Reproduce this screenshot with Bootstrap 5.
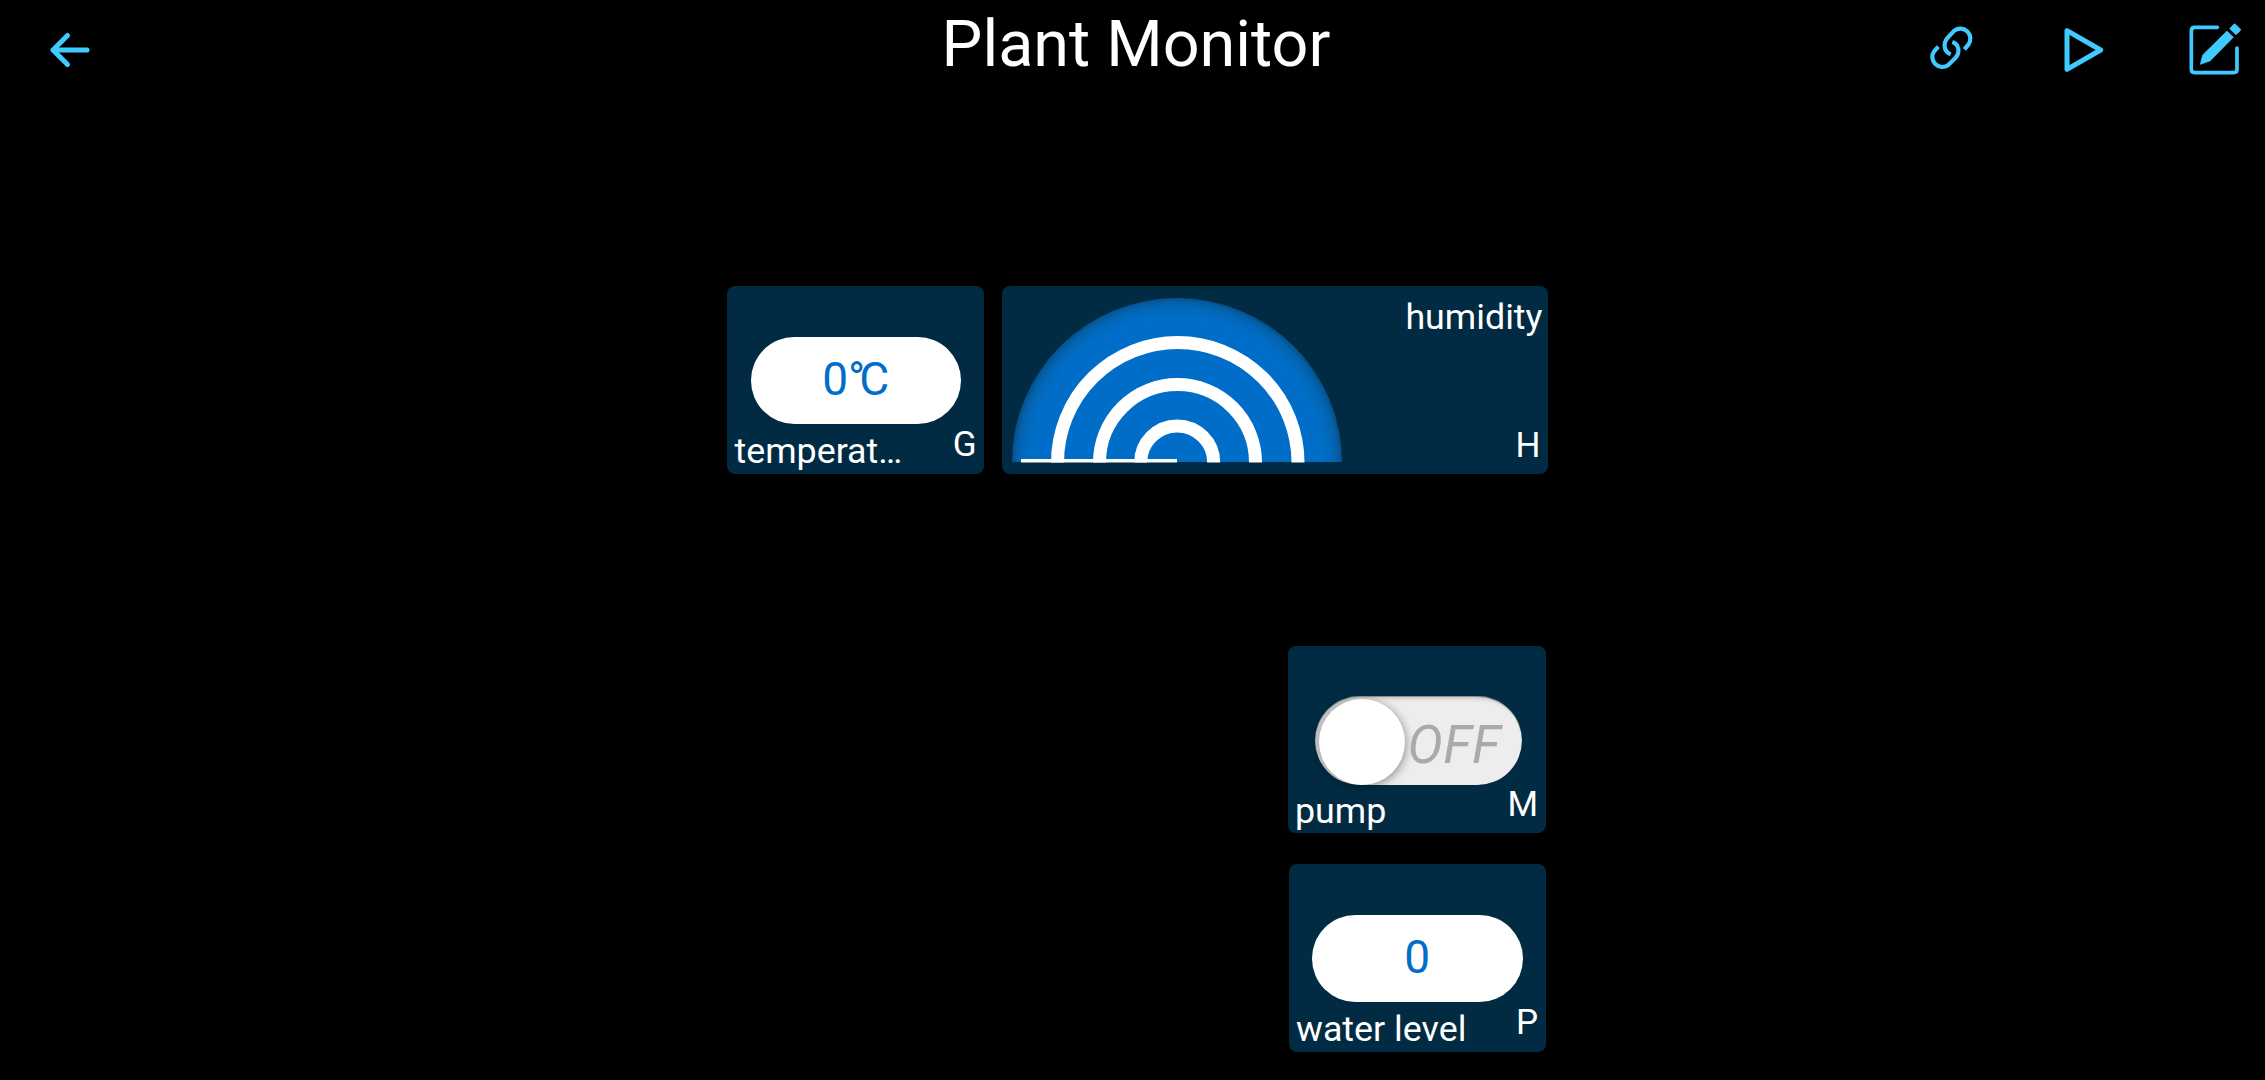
<!DOCTYPE html>
<html lang="en">
<head>
<meta charset="utf-8">
<meta name="viewport" content="width=device-width, initial-scale=1">
<title>Plant Monitor</title>
<link href="https://cdn.jsdelivr.net/npm/bootstrap@5.3.0/dist/css/bootstrap.min.css" rel="stylesheet">
<style>
  body { background: #000; color: #fff; font-family: Roboto, "Liberation Sans", sans-serif; min-height: 1080px; overflow: hidden; }
  .topbar { height: 100px; color: #3fcbff; }
  .topbar-side { flex: 1 1 0; height: 100px; }
  .topbar h1 { font-size: 64.7px; line-height: 88px; font-weight: 400; color: #fff; margin: 0 0 0 7px; }
  .topbar svg, .dial { display: block; }
  .board { width: 821px; margin-left: 727px; margin-top: 186px; }
  .tiles-top { gap: 18px; }
  .tiles-side { margin-top: 172px; padding-right: 2.5px; gap: 31px; }
  .tile { background: #002b42; border-radius: 8px; height: 188px; width: 257px; font-size: 35px; line-height: 40px; }
  .tile-pump { height: 187px; width: 258px; }
  .tile-wide { width: 546px; padding: 11px 5.5px 8.5px 10px; }
  .pill { width: 210.5px; height: 86.5px; margin: 51px 0 0 23.5px; padding-bottom: 2.5px; background: #fff; border-radius: 44px; color: #006ec8; font-size: 46px; }
  .degree { letter-spacing: -6px; }
  .toggle { width: 207px; height: 89.5px; margin: 49.5px 0 0 27.5px; padding: 3.5px 0 0 3.5px; background: #ededed; border-radius: 45px; box-shadow: inset 0 1px 1px rgba(0,0,0,.35), inset 4px 3px 4px rgba(0,0,0,.14); }
  .knob { width: 86px; height: 86px; background: #fff; box-shadow: 1px 2px 10px rgba(0,0,0,.4); }
  .state { font-size: 53px; line-height: 86px; font-style: italic; color: #aaa; padding: 3px 0 0 3px; letter-spacing: .3px; }
  .caption { padding: 1px 7.5px 0 7.5px; }
  .tile-pump .caption { padding-top: 0; }
  .title-text { font-size: 35.8px; }
  .caption .title-text { margin-top: 6px; }
  .pin { margin-right: 2px; }
</style>
</head>
<body>
<header class="topbar d-flex">
  <div class="topbar-side">
    <svg width="200" height="100" viewBox="0 0 200 100" fill="none" stroke="currentColor" stroke-width="5" stroke-linecap="round" stroke-linejoin="round"><path d="M87 50H53M67.500 35.500 53 50l14.500 14.500"/></svg>
  </div>
  <h1>Plant Monitor</h1>
  <div class="topbar-side d-flex justify-content-end">
    <svg class="flex-shrink-0" width="365" height="100" viewBox="0 0 1095 300" fill="none" stroke="currentColor">
      <g stroke-width="12.500">
        <path d="M152 163C132 155 128 132 142 114L163 92A30 30 0 0 1 205 134L193 148"/>
        <path d="M157 126C177 133 181 156 167 173L145 195A30 30 0 0 1 103 153L115 140"/>
      </g>
      <path d="M501 92 602 150 501 208Z" stroke-width="15" stroke-linejoin="round"/>
      <path d="M952 82H884Q874 82 874 92V208Q874 218 884 218H1001Q1011 218 1011 208V144" stroke-width="11" stroke-linecap="round"/>
      <g fill="currentColor" stroke-width="2" stroke-linejoin="round">
        <path d="M901 193 908 165 981 93 1000 112 930 183Z"/>
        <path d="M989 86 1001 73Q1004 70 1008 74L1020 86Q1024 90 1020 93L1008 104Z"/>
      </g>
    </svg>
  </div>
</header>

<main class="board">
  <div class="tiles-top d-flex">
    <section class="tile">
      <div class="pill d-flex align-items-center justify-content-center"><span>0<span class="degree">°</span>C</span></div>
      <div class="caption d-flex justify-content-between align-items-start"><span class="title-text">temperat…</span><span>G</span></div>
    </section>
    <section class="tile tile-wide d-flex justify-content-between">
      <svg class="dial flex-shrink-0" width="330" height="166" viewBox="0 0 330 166">
        <defs>
          <radialGradient id="rim" gradientUnits="userSpaceOnUse" cx="165" cy="165.500" r="165">
            <stop offset=".87" stop-color="#006ec8"/><stop offset=".93" stop-color="#0269bd"/><stop offset=".97" stop-color="#0460a8"/><stop offset="1" stop-color="#054f89"/>
          </radialGradient>
        </defs>
        <path d="M0 165A165 164 0 0 1 330 165Z" fill="url(#rim)"/>
        <g fill="none" stroke="#fff" stroke-width="13">
          <path d="M45.500 165.500A120.200 120 0 0 1 286 165.500"/>
          <path d="M87.500 165.500A78 78 0 0 1 243.500 165.500"/>
          <path d="M128.700 165.500A36.500 36.500 0 0 1 201.700 165.500"/>
        </g>
        <path d="M9 162H165V165.500H9Z" fill="#fff"/>
      </svg>
      <div class="d-flex flex-column justify-content-between align-items-end"><span class="title-text">humidity</span><span class="pin">H</span></div>
    </section>
  </div>
  <div class="tiles-side d-flex flex-column align-items-end">
    <section class="tile tile-pump">
      <div class="toggle d-flex"><div class="knob rounded-circle flex-shrink-0"></div><span class="state">OFF</span></div>
      <div class="caption d-flex justify-content-between align-items-start"><span class="title-text">pump</span><span>M</span></div>
    </section>
    <section class="tile">
      <div class="pill d-flex align-items-center justify-content-center">0</div>
      <div class="caption d-flex justify-content-between align-items-start"><span class="title-text">water level</span><span>P</span></div>
    </section>
  </div>
</main>
<script src="https://cdn.jsdelivr.net/npm/bootstrap@5.3.0/dist/js/bootstrap.bundle.min.js"></script>
</body>
</html>
